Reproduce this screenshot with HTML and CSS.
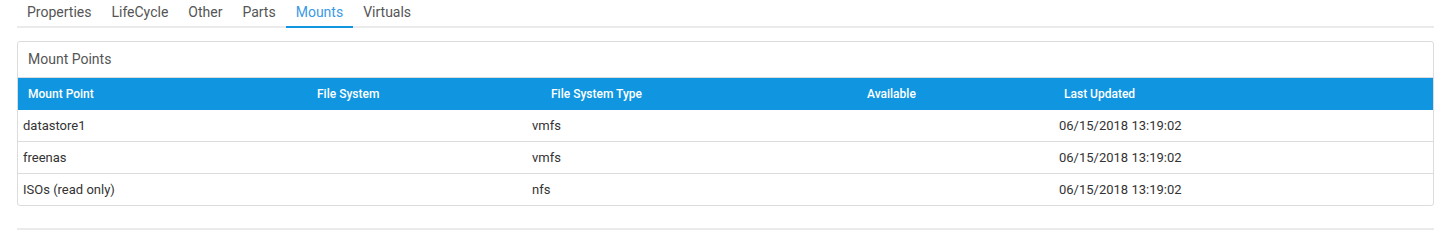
FILE: index.html
```html
<!DOCTYPE html>
<html lang="en">
<head>
    <meta charset="UTF-8">
    <title>Mounts</title>
    <link rel="stylesheet" href="styles.css">
</head>
<body>
    <div class="page">
        <div class="tabs">
            <a class="tab">Properties</a>
            <a class="tab">LifeCycle</a>
            <a class="tab">Other</a>
            <a class="tab">Parts</a>
            <a class="tab active">Mounts</a>
            <a class="tab">Virtuals</a>
        </div>

        <div class="panel">
            <div class="panel-title">Mount Points</div>
            <div class="grid-head">
                <div>Mount Point</div>
                <div>File System</div>
                <div>File System Type</div>
                <div>Available</div>
                <div>Last Updated</div>
            </div>
            <div class="grid-body">
                <div class="row">
                    <div>datastore1</div>
                    <div></div>
                    <div>vmfs</div>
                    <div></div>
                    <div>06/15/2018 13:19:02</div>
                </div>
                <div class="row">
                    <div>freenas</div>
                    <div></div>
                    <div>vmfs</div>
                    <div></div>
                    <div>06/15/2018 13:19:02</div>
                </div>
                <div class="row">
                    <div>ISOs (read only)</div>
                    <div></div>
                    <div>nfs</div>
                    <div></div>
                    <div>06/15/2018 13:19:02</div>
                </div>
            </div>
        </div>

        <div class="footer-line"></div>
    </div>
</body>
</html>
```

FILE: styles.css
```css
body {
    margin: 0;
    font-family: 'Roboto', sans-serif;
    font-size: 13px;
    color: #333;
    background: #fff;
}

.page {
    padding: 0 16px 0 17px;
}

.tabs {
    display: flex;
    height: 26px;
    border-bottom: 2px solid #ebebeb;
}

.tab {
    padding: 4px 10px 0;
    font-size: 14px;
    color: #555;
    cursor: pointer;
}

.tab.active {
    color: #3a9ae6;
    border-bottom: 2px solid #1096e0;
    margin-bottom: -2px;
}

.panel {
    margin-top: 13px;
    border: 1px solid #dcdcdc;
    border-radius: 3px;
}

.panel-title {
    height: 35px;
    line-height: 35px;
    padding-left: 10px;
    font-size: 14px;
    color: #555;
    border-bottom: 1px solid #dcdcdc;
}

.grid-head {
    display: grid;
    grid-template-columns: 289px 234px 316px 197px 1fr;
    height: 32px;
    line-height: 32px;
    background: #1096e0;
    color: #fff;
    font-size: 12px;
    font-weight: 500;
}

.grid-head div {
    padding-left: 10px;
}

.row {
    display: grid;
    grid-template-columns: 260px 249px 316px 211px 1fr;
    height: 31px;
    line-height: 31px;
    border-bottom: 1px solid #dcdcdc;
}

.row:last-child {
    border-bottom: none;
}

.row div {
    padding-left: 5px;
}

.footer-line {
    margin-top: 22px;
    border-top: 2px solid #ebebeb;
}
```
